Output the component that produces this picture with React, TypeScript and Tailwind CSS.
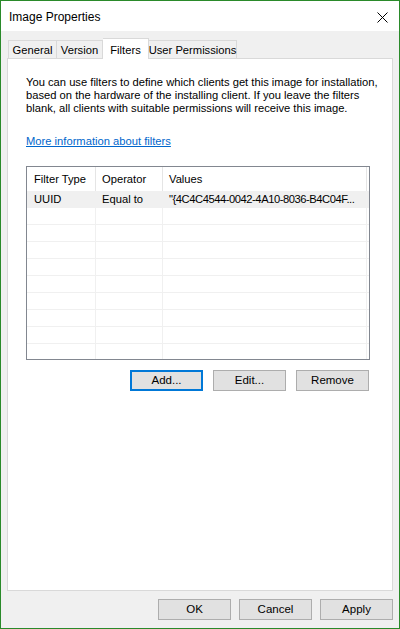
import React from "react";

const font = { fontFamily: '"Liberation Sans", Arial, sans-serif' };

function Btn({ label, def }: { label: string; def?: boolean }) {
  return (
    <div
      className={
        "w-[73px] h-[21px] flex items-center justify-center bg-[#e1e1e1] text-[11.5px] text-black whitespace-nowrap " +
        (def ? "border-2 border-[#0078d7]" : "border border-[#adadad]")
      }
    >
      {label}
    </div>
  );
}

export default function App() {
  const rows = Array.from({ length: 9 });
  return (
    <div
      className="w-[400px] h-[629px] border border-[#2a8a2a] bg-[#f0f0f0] flex flex-col text-black whitespace-nowrap"
      style={font}
    >
      {/* title bar */}
      <div className="h-[30px] bg-white flex items-center justify-between pl-[8px] pr-[11px] shrink-0">
        <span className="text-[12px] mt-[1px]">Image Properties</span>
        <svg width="11" height="11" viewBox="0 0 11 11" className="mt-[2px]">
          <path d="M0.5 0.5 L10.5 10.5 M10.5 0.5 L0.5 10.5" stroke="#000" strokeWidth="1" />
        </svg>
      </div>

      {/* tabs */}
      <div className="flex items-end h-[27px] pl-[7px] shrink-0 text-[11.2px]">
        <div className="h-[18px] w-[49px] border border-b-0 border-[#d9d9d9] bg-[#f0f0f0] flex items-center justify-center pt-[1px]">
          General
        </div>
        <div className="h-[18px] w-[46px] border border-b-0 border-l-0 border-[#d9d9d9] bg-[#f0f0f0] flex items-center justify-center pt-[1px]">
          Version
        </div>
        <div className="h-[21px] w-[46px] -mb-[1px] relative z-10 border border-b-0 border-l-0 border-[#d9d9d9] bg-white flex items-start pt-[3px] justify-center">
          Filters
        </div>
        <div className="h-[18px] w-[88px] border border-b-0 border-l-0 border-[#d9d9d9] bg-[#f0f0f0] flex items-center justify-center pt-[1px]">
          User Permissions
        </div>
      </div>

      {/* panel */}
      <div className="mx-[6px] h-[533px] border border-[#d9d9d9] bg-white shrink-0 pl-[18px] pt-[17px]">
        <p className="text-[11.2px] leading-[13px]">
          You can use filters to define which clients get this image for installation,
          <br />
          based on the hardware of the installing client. If you leave the filters
          <br />
          blank, all clients with suitable permissions will receive this image.
        </p>
        <div className="mt-[20px] text-[11.2px] leading-[13px] text-[#0066cc] underline">
          More information about filters
        </div>

        {/* list view */}
        <div className="mt-[18px] w-[344px] h-[194px] border border-[#828790] overflow-hidden text-[11.2px]">
          <div className="flex h-[24px]">
            <div className="w-[69px] pl-[7px] flex items-center border-r border-[#e5e5e5]">Filter Type</div>
            <div className="w-[67px] pl-[6px] flex items-center border-r border-[#e5e5e5]">Operator</div>
            <div className="w-[204px] pl-[6px] flex items-center border-r border-[#e5e5e5]">Values</div>
          </div>
          <div className="flex h-[17px] bg-[#f0f0f0] border-b border-[#f0f0f0]">
            <div className="w-[69px] pl-[7px] flex items-center">UUID</div>
            <div className="w-[67px] pl-[6px] flex items-center">Equal to</div>
            <div className="w-[204px] pl-[6px] leading-[16px] overflow-hidden tracking-[-0.45px]">
              "{"{"}4C4C4544-0042-4A10-8036-B4C04F...
            </div>
          </div>
          {rows.map((_, i) => (
            <div key={i} className="flex h-[17px] border-b border-[#f0f0f0]">
              <div className="w-[69px] border-r border-[#f0f0f0]" />
              <div className="w-[67px] border-r border-[#f0f0f0]" />
              <div className="w-[204px] border-r border-[#f0f0f0]" />
            </div>
          ))}
        </div>

        <div className="w-[344px] mt-[10px] flex justify-end gap-[10px] pr-[1px]">
          <Btn label="Add..." def />
          <Btn label="Edit..." />
          <Btn label="Remove" />
        </div>
      </div>

      {/* bottom buttons */}
      <div className="flex justify-end gap-[8px] pr-[6px] pt-[8px]">
        <Btn label="OK" />
        <Btn label="Cancel" />
        <Btn label="Apply" />
      </div>
    </div>
  );
}
